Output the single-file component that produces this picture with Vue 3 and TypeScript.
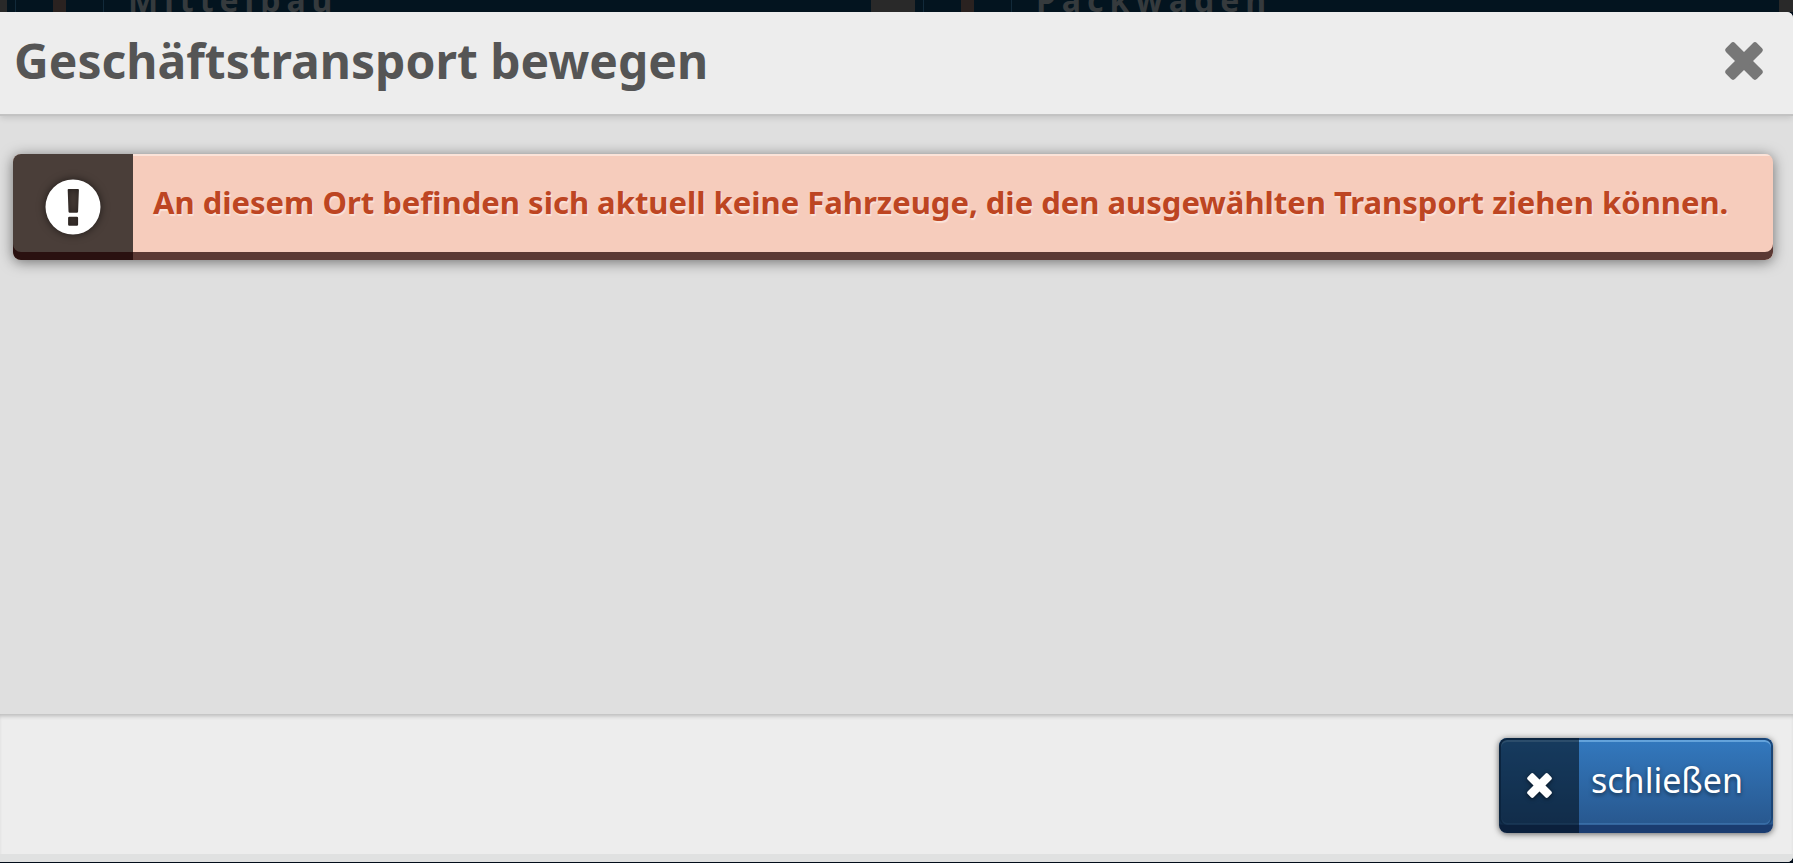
<script setup lang="ts">
import { ref } from 'vue'

interface Tile {
  name: string
}

const tiles: Tile[] = [{ name: 'Mittelbau' }, { name: 'Packwagen' }]
const title = 'Geschäftstransport bewegen'
const message =
  'An diesem Ort befinden sich aktuell keine Fahrzeuge, die den ausgewählten Transport ziehen können.'
const open = ref(true)

function close(): void {
  open.value = false
}
</script>

<template>
  <div class="page">
    <div class="backdrop" aria-hidden="true">
      <div v-for="tile in tiles" :key="tile.name" class="tile">
        <span class="thumb"><span class="thumb-mark"></span></span>
        <span class="tile-name">{{ tile.name }}</span>
      </div>
    </div>

    <section v-if="open" class="dialog" role="dialog" aria-labelledby="dialog-title">
      <header class="head">
        <h1 id="dialog-title">{{ title }}</h1>
        <button class="dismiss" type="button" aria-label="Schließen" @click="close">
          <svg viewBox="0 0 40 40" width="38" height="38" aria-hidden="true">
            <g transform="rotate(45 20 20)" fill="currentColor">
              <rect x="-3" y="13.3" width="46" height="13.4" rx="3.2" />
              <rect x="13.3" y="-3" width="13.4" height="46" rx="3.2" />
            </g>
          </svg>
        </button>
      </header>

      <main class="body">
        <div class="alert" role="alert">
          <div class="alert-icon">
            <svg viewBox="0 0 56 56" width="56" height="56" aria-hidden="true">
              <path
                fill="#fff"
                fill-rule="evenodd"
                d="M28 .5a27.500 27.500 0 1 0 0 55a27.500 27.500 0 1 0 0-55zM23.600 10h9.400q1 0 .9 1l-.8 21.500q-.1 1.200-1.200 1.200h-7.200q-1.100 0-1.200-1.200l-.8-21.500q-.1-1 .9-1zM24.300 37.800h7.600q1.200 0 1.200 1.200v6.600q0 1.200-1.200 1.200h-7.600q-1.200 0-1.200-1.200v-6.600q0-1.200 1.200-1.200z"
              />
            </svg>
          </div>
          <p>{{ message }}</p>
        </div>
      </main>

      <footer class="foot">
        <button class="action" type="button" @click="close">
          <span class="action-icon">
            <svg viewBox="0 0 40 40" width="25" height="25" aria-hidden="true">
              <g transform="rotate(45 20 20)" fill="currentColor">
                <rect x="-3" y="13.3" width="46" height="13.4" rx="3.2" />
                <rect x="13.3" y="-3" width="13.4" height="46" rx="3.2" />
              </g>
            </svg>
          </span>
          <span class="action-label">schließen</span>
        </button>
      </footer>
    </section>
  </div>
</template>

<style>
body {
  background: #020d1a;
}
</style>

<style scoped>
.page {
  display: flex;
  flex-direction: column;
  box-sizing: border-box;
  height: 100vh;
  padding-bottom: 1px;
  overflow: hidden;
  font-family: 'Noto Sans', 'Open Sans', sans-serif;
}

.backdrop {
  display: grid;
  grid-template-columns: 1fr 1fr;
  gap: 44px;
  flex: none;
  height: 12px;
  padding: 0 14px 0 7px;
  overflow: hidden;
  background: #292929;
}

.tile {
  display: flex;
  align-items: flex-end;
  height: 12px;
  padding-left: 8px;
  overflow: hidden;
  background: #03141f;
}

.thumb {
  display: flex;
  justify-content: center;
  box-sizing: border-box;
  width: 89px;
  height: 12px;
  border: solid #122a3a;
  border-width: 0 1px;
}

.thumb-mark {
  width: 13px;
  background: #2a2220;
}

.tile-name {
  margin-left: 24px;
  color: #353a3d;
  font-size: 32px;
  font-weight: 700;
  line-height: 24px;
  letter-spacing: 6px;
}

.dialog {
  display: flex;
  flex: 1;
  flex-direction: column;
  min-height: 0;
  overflow: hidden;
  border-radius: 0 6px 6px 0;
  background: #dfdfdf;
}

.head {
  display: flex;
  flex: none;
  align-items: center;
  justify-content: space-between;
  box-sizing: border-box;
  z-index: 1;
  height: 104px;
  padding: 0 30px 4px 14px;
  border-bottom: 2px solid #c3c3c3;
  background: #ededed;
  box-shadow: 0 2px 6px rgba(0, 0, 0, 0.12);
}

h1 {
  margin: 0;
  color: #555;
  font-size: 48px;
  font-weight: 700;
  line-height: 64px;
}

.dismiss {
  display: flex;
  padding: 0;
  border: 0;
  background: none;
  color: #777;
  cursor: pointer;
}

.body {
  flex: 1;
  padding: 38px 20px 0 13px;
}

.alert {
  position: relative;
  display: flex;
  overflow: hidden;
  border-radius: 8px;
  background: #f6ccbc;
  box-shadow: 0 2px 14px rgba(0, 0, 0, 0.5);
}

.alert::after {
  content: '';
  position: absolute;
  inset: 0;
  border-radius: 8px;
  box-shadow: inset 0 -8px 0 rgba(30, 0, 0, 0.72);
  pointer-events: none;
}

.alert-icon {
  display: flex;
  flex: none;
  align-items: center;
  justify-content: center;
  width: 120px;
  min-height: 106px;
  background: #4a3e39;
}

.alert-icon svg {
  filter: drop-shadow(0 0 4px rgba(0, 0, 0, 0.6));
}

.alert p {
  flex: 1;
  margin: 0;
  padding: 28px 20px 30px;
  box-shadow: inset 0 2px 0 #fbe3d9;
  color: #bd4522;
  font-size: 31px;
  font-weight: 700;
  line-height: 40px;
  text-shadow: 1px 2px 1px #fbe3d9;
}

.foot {
  display: flex;
  flex: none;
  align-items: flex-start;
  justify-content: flex-end;
  box-sizing: border-box;
  height: 148px;
  padding: 24px 20px 0;
  border-bottom: 8px solid #e0e1e1;
  background: #ededed;
  box-shadow: inset 0 4px 4px -2px rgba(0, 0, 0, 0.22);
}

.action {
  position: relative;
  display: flex;
  height: 95px;
  padding: 0;
  overflow: hidden;
  border: 0;
  border-radius: 8px;
  background: linear-gradient(#3379bf, #28588f 86px, #1a3c70 87px);
  box-shadow: 0 1px 6px rgba(0, 0, 0, 0.6);
  color: #fff;
  font: inherit;
  cursor: pointer;
}

.action::after {
  content: '';
  position: absolute;
  inset: 0 0 8px;
  border: 2px solid #1b4576;
  border-bottom: 0;
  border-radius: 8px;
  box-shadow:
    inset 0 2px 0 rgba(150, 205, 250, 0.5),
    inset 0 -2px 0 rgba(75, 135, 195, 0.45);
  pointer-events: none;
}

.action-icon {
  z-index: 1;
  display: flex;
  align-items: center;
  justify-content: center;
  width: 80px;
  height: 95px;
  background: rgba(0, 10, 20, 0.56);
}

.action-icon svg {
  filter: drop-shadow(0 1px 2px rgba(0, 0, 0, 0.6));
}

.action-label {
  padding: 18px 30px 0 12px;
  font-size: 34px;
  line-height: 48px;
  text-shadow: 0 2px 4px rgba(0, 0, 0, 0.5);
}
</style>
